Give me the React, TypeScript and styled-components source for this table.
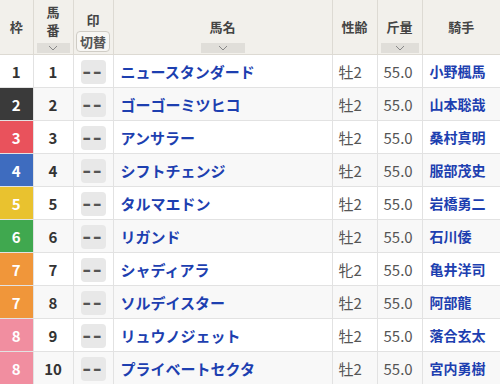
import React, { FC } from "react";
import styled, { createGlobalStyle } from "styled-components";

interface iHorse {
  waku: number;
  num: number;
  name: string;
  sexAge: string;
  weight: string;
  jockey: string;
}

const horses: iHorse[] = [
  { waku: 1, num: 1, name: "ニュースタンダード", sexAge: "牡2", weight: "55.0", jockey: "小野楓馬" },
  { waku: 2, num: 2, name: "ゴーゴーミツヒコ", sexAge: "牡2", weight: "55.0", jockey: "山本聡哉" },
  { waku: 3, num: 3, name: "アンサラー", sexAge: "牡2", weight: "55.0", jockey: "桑村真明" },
  { waku: 4, num: 4, name: "シフトチェンジ", sexAge: "牡2", weight: "55.0", jockey: "服部茂史" },
  { waku: 5, num: 5, name: "タルマエドン", sexAge: "牡2", weight: "55.0", jockey: "岩橋勇二" },
  { waku: 6, num: 6, name: "リガンド", sexAge: "牡2", weight: "55.0", jockey: "石川倭" },
  { waku: 7, num: 7, name: "シャディアラ", sexAge: "牝2", weight: "55.0", jockey: "亀井洋司" },
  { waku: 7, num: 8, name: "ソルデイスター", sexAge: "牡2", weight: "55.0", jockey: "阿部龍" },
  { waku: 8, num: 9, name: "リュウノジェット", sexAge: "牡2", weight: "55.0", jockey: "落合玄太" },
  { waku: 8, num: 10, name: "プライベートセクタ", sexAge: "牡2", weight: "55.0", jockey: "宮内勇樹" },
];

const wakuColors: { [k: number]: [string, string] } = {
  1: ["#ffffff", "#333333"],
  2: ["#3a3a3a", "#ffffff"],
  3: ["#e9525c", "#ffffff"],
  4: ["#3e6cbf", "#ffffff"],
  5: ["#e9c22f", "#ffffff"],
  6: ["#40a84f", "#ffffff"],
  7: ["#f0963a", "#ffffff"],
  8: ["#f18ea0", "#ffffff"],
};

const Chevron = () => (
  <svg width="10" height="6" viewBox="0 0 10 6">
    <path d="M1 1 L5 5 L9 1" fill="none" stroke="#888" strokeWidth="1" />
  </svg>
);

const SortHeader: FC<{ label: React.ReactNode; tall?: boolean }> = ({ label, tall }) => (
  <HeadStack>
    <HeadLabel $gap={tall ? 4 : 7}>{label}</HeadLabel>
    <SortBar>
      <Chevron />
    </SortBar>
  </HeadStack>
);

const App = () => {
  return (
    <>
      <GlobalStyle />
      <Table>
        <colgroup>
          <col style={{ width: 33 }} />
          <col style={{ width: 40 }} />
          <col style={{ width: 40 }} />
          <col style={{ width: 219 }} />
          <col style={{ width: 45 }} />
          <col style={{ width: 45 }} />
          <col style={{ width: 78 }} />
        </colgroup>
        <thead>
          <tr>
            <Th>
              <HeadLabel>枠</HeadLabel>
            </Th>
            <Th>
              <SortHeader
                tall
                label={
                  <>
                    馬<br />番
                  </>
                }
              />
            </Th>
            <Th>
              <HeadStack>
                <HeadLabel $gap={2}>印</HeadLabel>
                <SwitchButton>切替</SwitchButton>
              </HeadStack>
            </Th>
            <Th>
              <SortHeader label="馬名" />
            </Th>
            <Th>
              <HeadLabel>性齢</HeadLabel>
            </Th>
            <Th>
              <SortHeader label="斤量" />
            </Th>
            <Th>
              <HeadLabel>騎手</HeadLabel>
            </Th>
          </tr>
        </thead>
        <tbody>
          {horses.map((h, i) => (
            <Row key={h.num} $even={i % 2 === 1}>
              <WakuCell $bg={wakuColors[h.waku][0]} $fg={wakuColors[h.waku][1]}>
                {h.waku}
              </WakuCell>
              <NumCell>{h.num}</NumCell>
              <MarkCell>
                <MarkButton>
                  <Dashes>--</Dashes>
                </MarkButton>
              </MarkCell>
              <NameCell>{h.name}</NameCell>
              <PlainCell>{h.sexAge}</PlainCell>
              <PlainCell>{h.weight}</PlainCell>
              <JockeyCell>{h.jockey}</JockeyCell>
            </Row>
          ))}
        </tbody>
      </Table>
    </>
  );
};

export default App;

const GlobalStyle = createGlobalStyle`
  body {
    margin: 0;
    background: #ffffff;
    font-family: "Noto Sans CJK JP", "Noto Sans", sans-serif;
  }
`;

const Table = styled.table`
  width: 500px;
  border-collapse: collapse;
  table-layout: fixed;
`;

const Th = styled.th`
  height: 54px;
  padding: 0;
  background: #f2f0eb;
  border-right: 1px solid #dddad3;
  border-bottom: 1px solid #dddad3;
  text-align: center;
  vertical-align: middle;
  &:last-child {
    border-right: 0;
  }
`;

const HeadStack = styled.div`
  display: flex;
  flex-direction: column;
  align-items: center;
  justify-content: flex-end;
  height: 54px;
  padding-bottom: 1px;
  box-sizing: border-box;
`;

const HeadLabel = styled.div<{ $gap?: number }>`
  font-size: 13px;
  font-weight: 700;
  color: #444;
  line-height: 18px;
  margin-bottom: ${(p) => p.$gap || 0}px;
`;

const SortBar = styled.div`
  width: calc(100% - 6px);
  max-width: 44px;
  height: 10px;
  background: #e0ded9;
  display: flex;
  align-items: center;
  justify-content: center;
`;

const SwitchButton = styled.div`
  width: 34px;
  height: 21px;
  box-sizing: border-box;
  border: 1px solid #cfccc5;
  border-radius: 4px;
  background: #f7f6f3;
  font-size: 13px;
  line-height: 19px;
  color: #555;
  margin-bottom: 1px;
`;

const Row = styled.tr<{ $even: boolean }>`
  height: 33px;
  background: ${(p) => (p.$even ? "#f8f8f8" : "#ffffff")};
  td {
    border-right: 1px solid #e2e2e2;
    border-bottom: 1px solid #e2e2e2;
    padding: 0;
    vertical-align: middle;
  }
  td:last-child {
    border-right: 0;
  }
`;

const WakuCell = styled.td<{ $bg: string; $fg: string }>`
  background: ${(p) => p.$bg};
  color: ${(p) => p.$fg};
  text-align: center;
  font-size: 15px;
  font-weight: 700;
`;

const NumCell = styled.td`
  text-align: center;
  font-size: 15px;
  font-weight: 700;
  color: #333;
`;

const MarkCell = styled.td`
  text-align: center;
`;

const MarkButton = styled.div`
  display: inline-flex;
  align-items: center;
  justify-content: center;
  width: 25px;
  height: 24px;
  border-radius: 4px;
  background: #e8e8e8;
  color: #555;
  font-size: 16px;
  font-weight: 900;
`;

const Dashes = styled.span`
  display: inline-block;
  letter-spacing: 1px;
  transform: scaleX(1.35);
  font-family: "DejaVu Sans", sans-serif;
  font-weight: 700;
`;

const NameCell = styled.td`
  padding-left: 7px !important;
  font-size: 15px;
  font-weight: 700;
  color: #1d3fb0;
  white-space: nowrap;
`;

const PlainCell = styled.td`
  padding-left: 6px !important;
  font-size: 15px;
  color: #555;
  white-space: nowrap;
`;

const JockeyCell = styled.td`
  padding-left: 7px !important;
  font-size: 14px;
  font-weight: 700;
  color: #1d3fb0;
  white-space: nowrap;
`;
